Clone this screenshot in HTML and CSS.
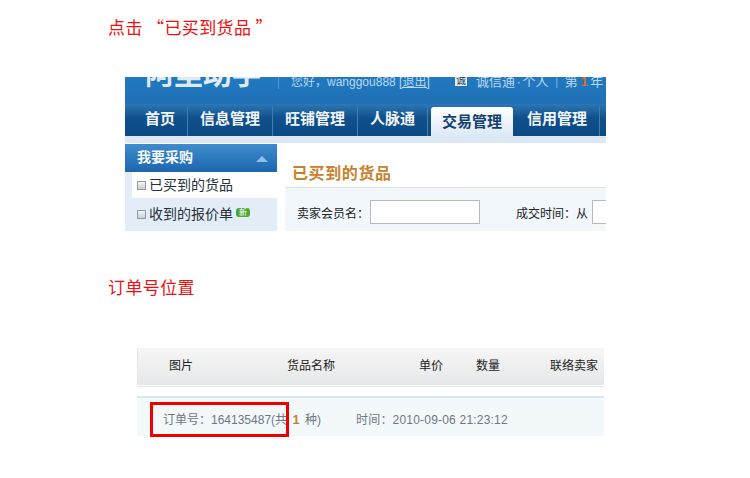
FILE: index.html
```html
<!DOCTYPE html>
<html lang="zh-CN">
  <head>
    <meta charset="UTF-8" />
    <title>订单号位置</title>
    <link rel="stylesheet" href="styles.css">
  </head>
  <body>
    <h2 class="step step-first">点击 “已买到货品 ”</h2>

    <div class="shot">
      <div class="topbar">
        <span class="logo">阿里助手</span>
        <span class="hello">您好，wanggou888 <u>[退出]</u></span>
        <span class="cheng">诚</span>
        <span class="trust">诚信通 · 个人 ｜ 第 <b>1</b> 年</span>
      </div>
      <div class="nav">
        <span class="nav-item">首页</span>
        <span class="nav-item">信息管理</span>
        <span class="nav-item">旺铺管理</span>
        <span class="nav-item">人脉通</span>
        <span class="nav-item nav-active">交易管理</span>
        <span class="nav-item nav-after">信用管理</span>
      </div>
      <div class="subband"></div>
      <div class="content">
        <div class="side">
          <div class="side-head">
            <span>我要采购</span>
            <svg class="side-arrow" width="12" height="6" viewBox="0 0 12 6"><polygon points="0,6 6,0 12,6" fill="#8fc0e8" /></svg>
          </div>
          <div class="side-item side-current"><i class="box"></i>已买到的货品</div>
          <div class="side-item"><i class="box"></i>收到的报价单<span class="new">新</span></div>
        </div>
        <div class="main">
          <h3 class="main-title">已买到的货品</h3>
          <div class="search">
            <label class="search-label">卖家会员名：</label>
            <input class="search-input" type="text" />
            <label class="search-label search-time">成交时间：从</label>
            <input class="search-input search-date" type="text" />
          </div>
        </div>
      </div>
    </div>

    <h2 class="step step-second">订单号位置</h2>

    <div class="orders">
      <div class="order-head">
        <span class="col col-pic">图片</span>
        <span class="col col-name">货品名称</span>
        <span class="col col-price">单价</span>
        <span class="col col-num">数量</span>
        <span class="col col-seller">联络卖家</span>
      </div>
      <div class="order-row">
        <span class="order-no">订单号：164135487(共 <b>1</b> 种)</span>
        <span class="order-time">时间：2010-09-06 21:23:12</span>
        <div class="redbox"></div>
      </div>
    </div>
  </body>
</html>
```

FILE: styles.css
```css
body {
  margin: 0;
  height: 478px;
  overflow: hidden;
  background: #ffffff;
  font-family: "Liberation Sans", "Noto Sans CJK SC", sans-serif;
}
.step {
  margin: 0 0 0 108px;
  font-family: "Noto Sans CJK SC", sans-serif;
  font-size: 17px;
  font-weight: normal;
  letter-spacing: .4px;
  line-height: 24px;
  color: #f01010;
}
.step-first {
  padding-top: 15px;
}
.step-second {
  margin-top: 44px;
}

/* first screenshot */
.shot {
  width: 481px;
  height: 154px;
  margin: 38px 0 0 125px;
  overflow: hidden;
}
.topbar {
  display: flex;
  align-items: flex-start;
  height: 27px;
  overflow: hidden;
  background: linear-gradient(#2279c0, #1f70b6);
  color: #b9d8f0;
  font-size: 12px;
}
.logo {
  flex: none;
  width: 133px;
  margin: -20px 0 0 20px;
  font-size: 29px;
  line-height: 36px;
  font-weight: bold;
  color: #dfeaf4;
  white-space: nowrap;
}
.hello {
  flex: none;
  width: 164px;
  height: 12px;
  padding-left: 12px;
  line-height: 10px;
  white-space: nowrap;
  border-left: 1px solid #4f95cf;
}
.cheng {
  flex: none;
  width: 12px;
  height: 9px;
  background: #e7eef4;
  color: #1d3d60;
  font-size: 10px;
  line-height: 8px;
  text-align: center;
  overflow: hidden;
}
.trust {
  flex: none;
  margin-left: 9px;
  line-height: 10px;
  font-size: 13px;
  word-spacing: -2px;
  white-space: nowrap;
}
.trust b {
  margin: 0 1px;
  color: #d8701e;
}
.nav {
  display: flex;
  align-items: flex-end;
  height: 32px;
  padding-left: 8px;
  background: linear-gradient(#2b77b4 0%, #0f4f8a 45%, #0c4a84 100%);
}
.nav-item {
  flex: none;
  height: 30px;
  padding: 0 12px;
  font-size: 15px;
  font-weight: bold;
  line-height: 25px;
  color: #f2f6fa;
  border-right: 1px solid #3f7fb3;
  white-space: nowrap;
}
.nav-active {
  margin-left: 3px;
  padding: 0 11px;
  height: 29px;
  line-height: 30px;
  color: #14426e;
  border-right: none;
  border-radius: 3px 3px 0 0;
  background: linear-gradient(#ffffff, #dce9f5);
}
.nav-after {
  margin-left: 2px;
}
.subband {
  height: 7px;
  background: #dce9f5;
}
.content {
  display: flex;
  height: 88px;
  margin-top: 1px;
}
.side {
  width: 152px;
  flex: none;
  background: #e3edf8;
}
.side-head {
  display: flex;
  align-items: center;
  justify-content: space-between;
  height: 28px;
  padding: 0 9px 4px 12px;
  background: linear-gradient(#3f8ccd, #1c66ae);
  color: #f4f8fb;
  font-size: 14px;
  font-weight: bold;
  box-sizing: border-box;
}
.side-arrow {
  margin-top: 6px;
}
.side-item {
  display: flex;
  align-items: center;
  height: 33px;
  padding: 0 0 3px 12px;
  box-sizing: border-box;
  font-size: 14px;
  color: #26303a;
}
.side-current {
  height: 26px;
  margin-left: 7px;
  padding: 0 0 2px 5px;
  background: #ffffff;
}
.box {
  width: 7px;
  height: 7px;
  margin: 2px 3px 0 0;
  border: 1px solid #8f9aa5;
  background: linear-gradient(#f4f5f6, #c9ced3);
}
.new {
  width: 14px;
  height: 9px;
  margin: 0 0 2px 3px;
  border-radius: 3px;
  background: #4da838;
  color: #ffffff;
  font-size: 8px;
  line-height: 9px;
  text-align: center;
}
.main {
  flex: 1;
  margin-left: 8px;
  min-width: 0;
}
.main-title {
  margin: 0;
  height: 44px;
  padding: 18px 0 0 7px;
  box-sizing: border-box;
  font-size: 16px;
  letter-spacing: .6px;
  line-height: 24px;
  color: #c8822e;
  border-bottom: 1px solid #dde2e6;
}
.search {
  display: flex;
  align-items: center;
  height: 43px;
  padding: 5px 0 0 12px;
  box-sizing: border-box;
  background: #f2f7fb;
  overflow: hidden;
}
.search-label {
  flex: none;
  font-size: 12px;
  color: #222222;
  white-space: nowrap;
}
.search-input {
  flex: none;
  width: 110px;
  height: 24px;
  padding: 0;
  margin: 0 0 0 1px;
  box-sizing: border-box;
  border: 1px solid #b5b9bd;
  background: #ffffff;
}
.search-time {
  margin-left: 36px;
}
.search-date {
  margin-left: 4px;
}

/* second screenshot */
.orders {
  width: 467px;
  margin: 49px 0 0 137px;
}
.order-head {
  display: flex;
  align-items: center;
  height: 37px;
  padding-bottom: 5px;
  box-sizing: border-box;
  border-left: 1px solid #e4e6e8;
  box-shadow: 0 1px 0 #ffffff, 0 2px 0 #dfe5ea;
  background: linear-gradient(#f6f6f6, #e6e7e8);
  font-size: 12px;
  color: #222222;
}
.col {
  flex: none;
  white-space: nowrap;
}
.col-pic {
  margin-left: 31px;
  width: 118px;
}
.col-name {
  width: 132px;
}
.col-price {
  width: 57px;
}
.col-num {
  width: 74px;
}
.order-row {
  position: relative;
  display: flex;
  align-items: center;
  height: 40px;
  margin-top: 11px;
  padding: 3px 0 0 26px;
  box-sizing: border-box;
  border-top: 2px solid #dbe6ee;
  background: #f3f8fb;
  font-size: 12px;
  color: #70777d;
}
.order-no {
  width: 193px;
  flex: none;
  white-space: nowrap;
}
.order-no b {
  margin: 0 2px;
  font-size: 13px;
  color: #c8822e;
}
.order-time {
  letter-spacing: .2px;
  white-space: nowrap;
}
.redbox {
  position: absolute;
  left: 13px;
  top: 4px;
  width: 139px;
  height: 35px;
  box-sizing: border-box;
  border: 3px solid #ee0000;
}
```
